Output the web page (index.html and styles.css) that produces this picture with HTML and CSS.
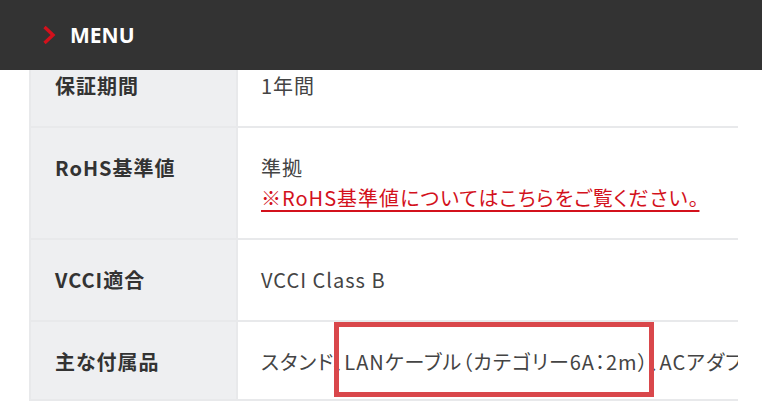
FILE: index.html
```html
<!DOCTYPE html>
<html lang="ja">
<head>
<meta charset="utf-8">
<title>Spec</title>
<link rel="stylesheet" href="styles.css">
</head>
<body>
<header class="topbar">
  <svg class="chev" width="14" height="20" viewBox="0 0 14 20" aria-hidden="true">
    <polyline points="2.5,2 11,10 2.5,18" fill="none" stroke="#d3111c" stroke-width="3.4"/>
  </svg>
  <span class="menu">MENU</span>
</header>
<main class="page">
  <div class="spec-wrap">
    <table class="spec">
      <tr>
        <th>保証期間</th>
        <td>1年間</td>
      </tr>
      <tr>
        <th>RoHS基準値</th>
        <td>準拠<br><a class="link" href="#">※RoHS基準値についてはこちらをご覧ください。</a></td>
      </tr>
      <tr>
        <th>VCCI適合</th>
        <td>VCCI Class B</td>
      </tr>
      <tr class="last">
        <th>主な付属品</th>
        <td class="nowrap">スタンド、<span class="hl">LANケーブル（カテゴリー6A：2m）</span>、ACアダプター、電源ケーブル</td>
      </tr>
    </table>
  </div>
</main>
</body>
</html>
```

FILE: styles.css
```css
html, body {
  margin: 0;
  padding: 0;
  background: #ffffff;
}
body {
  font-family: "Noto Sans CJK JP", "Noto Sans", sans-serif;
  color: #444;
  font-feature-settings: "palt";
}
.topbar {
  position: fixed;
  top: 0;
  left: 0;
  right: 0;
  height: 70px;
  background: #333333;
  display: flex;
  align-items: center;
  padding-left: 42px;
  gap: 14px;
  z-index: 10;
}
.chev {
  display: block;
}
.menu {
  color: #fff;
  font-family: "Noto Sans", "Noto Sans CJK JP", sans-serif;
  font-weight: 700;
  font-size: 21px;
}
.page {
  padding-top: 44px;
}
.spec-wrap {
  margin-left: 29px;
  width: 709px;
  overflow: hidden;
}
.spec {
  border-collapse: collapse;
  width: 709px;
  table-layout: fixed;
}
.spec th,
.spec td {
  border: 2px solid #e8e9eb;
  padding: 25px 22px 25px 24px;
  font-size: 20px;
  line-height: 30px;
  letter-spacing: 1px;
  vertical-align: top;
  text-align: left;
}
.spec th {
  width: 159px;
  background: #eeeff1;
  color: #333;
  font-weight: 700;
}
.spec td {
  background: #fff;
  color: #444;
  padding-left: 23px;
  border-right: none;
}
.spec .last th,
.spec .last td {
  padding-bottom: 22px;
}
.spec .nowrap {
  white-space: nowrap;
}
.link {
  color: #d3111c;
  text-decoration: underline;
  text-decoration-thickness: 2px;
  text-underline-offset: 4px;
}
.hl {
  position: relative;
}
.hl::after {
  content: "";
  position: absolute;
  left: -10px;
  right: -5px;
  top: -25px;
  bottom: -21px;
  border: 5px solid #d9474b;
  pointer-events: none;
}
```
